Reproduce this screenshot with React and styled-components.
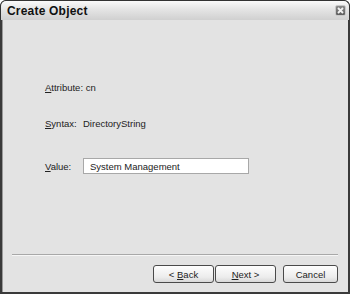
import React from 'react'
import styled, { createGlobalStyle } from 'styled-components'

const Global = createGlobalStyle`
  html, body { margin: 0; padding: 0; background: #fff; }
  body { font-family: "Liberation Sans", Arial, sans-serif; }
`

function App() {
  return (
    <>
      <Global />
      <Window>
        <TitleBar>
          <Title>Create Object</Title>
          <CloseBtn>
            <svg width="7" height="7" viewBox="0 0 7 7">
              <path d="M1 1L6 6M6 1L1 6" stroke="#f2f2f2" strokeWidth="1.8" />
            </svg>
          </CloseBtn>
        </TitleBar>
        <Client>
          <Fields>
            <Row>
              <Label><u>A</u>ttribute:</Label>&nbsp;cn
            </Row>
            <Row top={20}>
              <Label width={38}><u>S</u>yntax:</Label>
              <span>DirectoryString</span>
            </Row>
            <Row top={27}>
              <Label width={38}><u>V</u>alue:</Label>
              <Input>System Management</Input>
            </Row>
          </Fields>
          <Separator />
          <Buttons>
            <Button><span>&lt; <u>B</u>ack</span></Button>
            <Button><span><u>N</u>ext &gt;</span></Button>
            <Button width={55} gapLeft={6}>Cancel</Button>
          </Buttons>
        </Client>
      </Window>
    </>
  )
}

export default App

const Window = styled.div`
width:350px;
height:294px;
box-sizing:border-box;
background:#3a3a3a;
border-radius:6px 6px 0 0;
padding:0 2px 2px 2px;
display:flex;
flex-direction:column;
overflow:hidden;
`
const TitleBar = styled.div`
height:20px;
margin:0 -2px;
padding:0 3px 0 6px;
display:flex;
align-items:center;
justify-content:space-between;
background:linear-gradient(#fafafa 0%, #e6e6e6 40%, #d0d0d0 100%);
border-radius:6px 6px 0 0;
border:1px solid #333;
border-bottom:none;
box-sizing:border-box;
`
const Title = styled.div`
font-weight:bold;
font-size:12px;
color:#111;
letter-spacing:0.2px;
`
const CloseBtn = styled.div`
width:11px;
height:11px;
border-radius:2px;
background:linear-gradient(#8a8a8a, #5e5e5e);
border:1px solid #c8c8c8;
box-sizing:border-box;
display:flex;
align-items:center;
justify-content:center;
`
const Client = styled.div`
flex:1;
background:#e3e3e3;
border-left:1px solid #9a9a9a;
display:flex;
flex-direction:column;
padding:0 10px 0 9px;
`
const Fields = styled.div`
padding:59px 0 0 33px;
flex:1;
display:flex;
flex-direction:column;
`
const Row = styled.div`
display:flex;
align-items:center;
height:16px;
margin-top:${p => p.top || 0}px;
font-size:9.5px;
color:#222;
`
const Label = styled.span`
display:inline-block;
width:${p => p.width ? p.width + 'px' : 'auto'};
`
const Input = styled.div`
width:166px;
height:16px;
box-sizing:border-box;
background:#fff;
border:1px solid #a8a8a8;
padding:0 6px;
display:flex;
align-items:center;
`
const Separator = styled.div`
height:1px;
background:#a8a8a8;
border-bottom:1px solid #f6f6f6;
`
const Buttons = styled.div`
display:flex;
justify-content:flex-end;
padding:9px 0 9px 0;
gap:1px;
`
const Button = styled.div`
width:${p => p.width || 61}px;
height:18px;
margin-left:${p => p.gapLeft || 0}px;
box-sizing:border-box;
border:1px solid #4a4a4a;
border-radius:3px;
background:linear-gradient(#fefefe, #ececec 70%, #d8d8d8);
font-size:9.5px;
color:#222;
display:flex;
align-items:center;
justify-content:center;
`
